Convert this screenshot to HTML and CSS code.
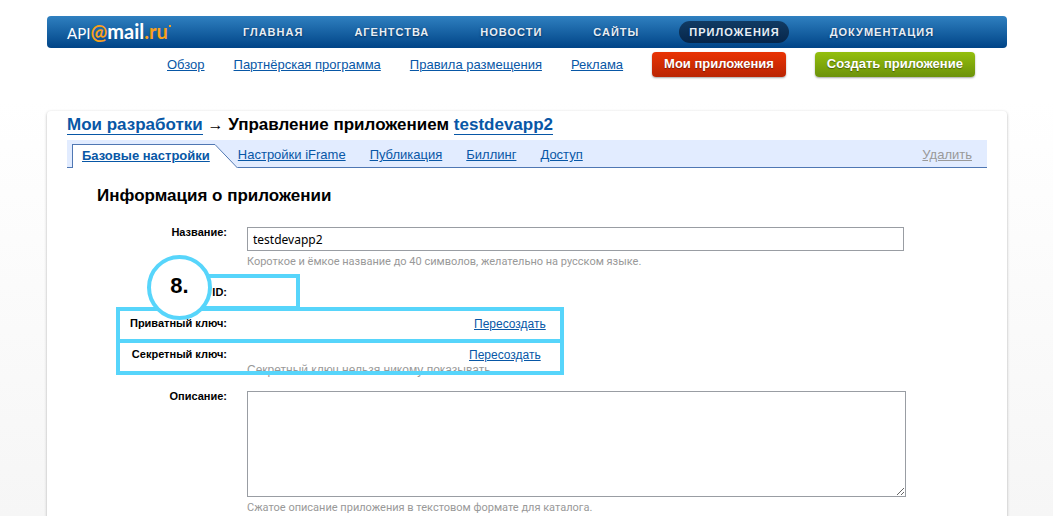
FILE: index.html
```html
<!DOCTYPE html>
<html lang="ru">
<head>
<meta charset="utf-8">
<title>API@mail.ru — Управление приложением</title>
<link rel="stylesheet" href="styles.css">
</head>
<body>
<header>
  <nav class="topbar">
    <a class="logo" href="#"><span class="logo-api">API</span><span class="logo-at">@</span><span class="logo-mail">mail</span><span class="logo-ru">.ru</span><span class="logo-dot"></span></a>
    <div class="menu">
      <a href="#">ГЛАВНАЯ</a>
      <a href="#">АГЕНТСТВА</a>
      <a href="#">НОВОСТИ</a>
      <a href="#">САЙТЫ</a>
      <a href="#" class="current">ПРИЛОЖЕНИЯ</a>
      <a href="#">ДОКУМЕНТАЦИЯ</a>
    </div>
  </nav>
  <nav class="subnav">
    <a href="#">Обзор</a>
    <a href="#">Партнёрская программа</a>
    <a href="#">Правила размещения</a>
    <a href="#">Реклама</a>
    <button type="button" class="btn btn-red">Мои приложения</button>
    <button type="button" class="btn btn-green">Создать приложение</button>
  </nav>
</header>
<main class="panel">
  <h1 class="crumbs"><a href="#">Мои разработки</a> <span class="arrow">→</span> Управление приложением <a href="#">testdevapp2</a></h1>
  <nav class="tabs">
    <div class="tab-active">
      <a href="#">Базовые настройки</a>
      <svg width="23" height="24" viewBox="0 0 23 24"><path d="M0 0L23 24H0Z" fill="#fff"/><path d="M0 .5L22.5 24" fill="none" stroke="#4f77b3"/></svg>
    </div>
    <a href="#">Настройки iFrame</a>
    <a href="#">Публикация</a>
    <a href="#">Биллинг</a>
    <a href="#">Доступ</a>
    <a href="#" class="remove">Удалить</a>
  </nav>
  <h2 class="section-title">Информация о приложении</h2>
  <form class="form">
    <div class="row">
      <label for="name">Название:</label>
      <div class="field">
        <input id="name" class="text" type="text" value="testdevapp2">
        <p class="hint">Короткое и ёмкое название до 40 символов, желательно на русском языке.</p>
      </div>
    </div>
    <div class="keys">
      <div class="row key-row"><span class="label">ID:</span></div>
      <div class="row key-row"><span class="label">Приватный ключ:</span><div class="field"><a href="#" class="renew">Пересоздать</a></div></div>
      <div class="row key-row"><span class="label">Секретный ключ:</span><div class="field"><a href="#" class="renew renew-secret">Пересоздать</a><p class="secret-hint">Секретный ключ нельзя никому показывать.</p></div></div>
      <div class="mark mark-id"></div>
      <div class="mark mark-private"></div>
      <div class="mark mark-secret"></div>
      <div class="step">8.</div>
    </div>
    <div class="row">
      <label for="about">Описание:</label>
      <div class="field">
        <textarea id="about"></textarea>
        <p class="hint">Сжатое описание приложения в текстовом формате для каталога.</p>
      </div>
    </div>
  </form>
</main>
</body>
</html>
```

FILE: styles.css
```css
* { box-sizing: border-box; }
body {
  margin: 0;
  padding: 16px 46px 0 47px;
  font-family: "Liberation Sans", Arial, sans-serif;
  font-size: 12px;
  color: #000;
  background: linear-gradient(#fff 100px, #f6f6f6 516px) no-repeat #f6f6f6;
}
a { color: #0857a6; }
h1, h2, p { margin: 0; }

.topbar {
  display: flex;
  align-items: center;
  height: 32px;
  padding-left: 20px;
  border-radius: 4px;
  background: linear-gradient(#2f80c0, #004487);
}
.logo {
  display: flex;
  align-items: baseline;
  width: 165px;
  font-family: Lato, sans-serif;
  font-size: 20px;
  font-weight: 700;
  line-height: 26px;
  color: #fff;
  text-decoration: none;
}
.logo-api { font-size: 15px; font-weight: 400; }
.logo-at { color: #f9a01b; }
.logo-ru { color: #f9a01b; }
.logo-dot { align-self: flex-start; width: 2px; height: 2px; margin: 7px 0 0 1px; background: #f9a01b; }
.menu { display: flex; gap: 30px; }
.menu a {
  height: 22px;
  padding: 0 10px 0 11px;
  border-radius: 11px;
  font-size: 11px;
  line-height: 22px;
  font-weight: 700;
  letter-spacing: 1px;
  color: #e8eef4;
  text-decoration: none;
  text-shadow: 0 1px 2px #012c5a;
}
.menu .current { padding: 0 9px 0 10px; background: linear-gradient(#113b63, #06264a); }

.subnav {
  display: flex;
  gap: 29px;
  padding: 4px 0 0 120px;
  font-size: 13px;
  line-height: 25px;
}
.btn {
  height: 25px;
  padding: 0 12px 2px;
  border: 0;
  border-radius: 4px;
  font: 700 13px/23px "Liberation Sans", Arial, sans-serif;
  color: #fff;
  text-shadow: 0 1px 1px rgba(0, 0, 0, .4);
  box-shadow: 0 1px 2px rgba(0, 0, 0, .35);
}
.btn-red { background: linear-gradient(#e93304, #ba2503); }
.btn-green { background: linear-gradient(#94bf0d, #6c920a); }

.panel {
  margin-top: 34px;
  padding: 4px 20px 0;
  border-radius: 4px 4px 0 0;
  background: #fff;
  box-shadow: 0 1px 3px rgba(0, 0, 0, .3);
}
.crumbs { height: 25px; font-size: 17px; line-height: 19px; }
.crumbs a { text-decoration: none; border-bottom: 1px solid #0857a6; }
.arrow { font-size: 16px; font-weight: 400; }

.tabs {
  display: flex;
  height: 28px;
  padding: 0 15px 0 5px;
  gap: 24px;
  font-size: 13px;
  line-height: 29px;
  border-bottom: 1px solid #4f77b3;
  background: #e2ecff;
}
.tab-active { display: flex; height: 24px; margin: 4px -24px 0 0; }
.tab-active a {
  padding: 0 5px 0 9px;
  border-left: 1px solid #4f77b3;
  border-top: 1px solid #4f77b3;
  background: #fff;
  font-weight: 700;
  line-height: 22px;
}
.tabs .remove { margin-left: auto; color: #999; }

.section-title { padding: 18px 0 0 30px; font-size: 17px; line-height: 20px; }

.form { padding: 21px 81px 8px 0; }
.row { display: flex; gap: 20px; }
.row label, .label {
  flex: 0 0 160px;
  font-size: 11px;
  line-height: 12px;
  font-weight: 700;
  text-align: right;
}
.row label { line-height: 10px; }
.field { flex: 1; min-width: 0; }
.text {
  display: block;
  width: calc(100% - 2px);
  height: 24px;
  padding: 0 5px;
  border: 1px solid #999da3;
  font: 12px "Noto Sans", sans-serif;
}
.hint {
  padding-top: 3px;
  font: 11px/16px Roboto, sans-serif;
  color: #999;
}
.keys { position: relative; padding-top: 16px; height: 121px; }
.key-row { height: 31px; }
.key-row .field { line-height: 14px; }
.renew { margin-left: 227px; }
.renew-secret { margin-left: 222px; }
.secret-hint { color: #999; line-height: 16px; }
.mark { position: absolute; left: 49px; width: 448px; height: 36px; border: 4px solid #57d5fb; }
.mark-id { top: 4px; left: 100px; width: 133px; }
.mark-private { top: 37px; }
.mark-secret { top: 69px; }
.step {
  position: absolute;
  left: 80px;
  top: -15px;
  width: 65px;
  height: 65px;
  border: 4px solid #57d5fb;
  border-radius: 50%;
  background: #fff;
  font: 700 22px/54px "Liberation Sans", Arial, sans-serif;
  text-align: center;
}
textarea {
  display: block;
  width: 100%;
  height: 106px;
  border: 1px solid #999da3;
  resize: both;
}
```
